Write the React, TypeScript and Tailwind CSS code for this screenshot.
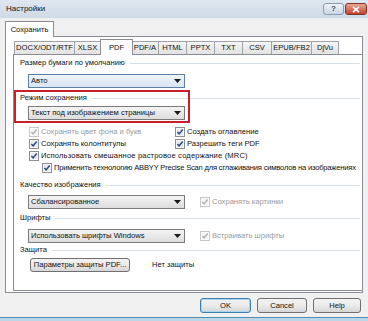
import React from "react";

const Check = ({ on = true, off = false }: { on?: boolean; off?: boolean }) => (
  <svg width="10" height="10" viewBox="0 0 10 10" className="shrink-0">
    <rect x="0.5" y="0.5" width="9" height="9" fill="#fff" stroke={off ? "#c8c8c8" : "#8e8f8f"} />
    <rect x="1.5" y="1.5" width="7" height="7" fill={off ? "#f5f5f5" : "#e6eaf0"} />
    {on && (
      <path
        d="M2.4 5.1 L4.1 6.9 L7.7 2.6"
        fill="none"
        stroke={off ? "#b4b4b4" : "#2a4a7c"}
        strokeWidth="1.5"
      />
    )}
  </svg>
);

const Arrow = () => (
  <svg width="7" height="4" viewBox="0 0 7 4" className="shrink-0">
    <path d="M0 0H7L3.5 4Z" fill="#1a1a1a" />
  </svg>
);

const Combo = ({ text, blue }: { text: string; blue?: boolean }) => (
  <div
    className={
      blue
        ? "ml-[14px] w-[157px] h-[14px] flex items-center border border-[#5b7fa6] bg-gradient-to-b from-[#eef4fb] to-[#d8e5f2] pl-[2px] pr-[3px]"
        : "ml-[14px] w-[157px] h-[14px] flex items-center border border-[#7a7a7a] bg-gradient-to-b from-[#f4f4f4] to-[#dddddd] pl-[2px] pr-[3px]"
    }
  >
    <span className="flex-1 truncate leading-none">{text}</span>
    <Arrow />
  </div>
);

const GroupHead = ({ label }: { label: string }) => (
  <div className="flex items-center h-[10px] pl-[6px] pr-[2px] gap-[5px]">
    <span className="leading-none">{label}</span>
    <div className="flex-1 h-px bg-[#d5dfe5]" />
  </div>
);

const tabs = [
  { t: "DOCX/ODT/RTF", w: "w-[61px]" },
  { t: "XLSX", w: "w-[27px]" },
  { t: "PDF", w: "w-[33px]", sel: true },
  { t: "PDF/A", w: "w-[28px]" },
  { t: "HTML", w: "w-[29px]" },
  { t: "PPTX", w: "w-[29px]" },
  { t: "TXT", w: "w-[29px]" },
  { t: "CSV", w: "w-[30px]" },
  { t: "EPUB/FB2", w: "w-[41px]" },
  { t: "DjVu", w: "w-[28px]" },
];

const Btn = ({ label, w, def }: { label: string; w: string; def?: boolean }) => (
  <div
    className={`${w} h-[15px] flex items-center justify-center rounded-[3px] border bg-gradient-to-b from-[#f2f2f2] via-[#ebebeb] to-[#d6d6d6] ${
      def ? "border-[#3c7fb1] shadow-[inset_0_0_0_1px_#a9d4ee]" : "border-[#707070]"
    }`}
  >
    {label}
  </div>
);

export default function App() {
  return (
    <div className="w-[368px] h-[321px] bg-[#f0f0f0] flex flex-col overflow-hidden relative whitespace-nowrap font-['Liberation_Sans',Arial,sans-serif] text-[7.6px] text-[#111]">
      {/* title bar */}
      <div className="h-[18px] flex items-center pl-[6px] pr-[1px] bg-gradient-to-b from-[#dfe7f0] to-[#cfdae6]">
        <span className="flex-1 text-[8px]">Настройки</span>
        <div className="w-[21px] h-[12px] rounded-[3px] border border-[#8a9bb0] bg-gradient-to-b from-[#eef3f8] to-[#c9d6e4] flex items-center justify-center text-[8px] text-[#3b4b61] font-bold leading-none">
          ?
        </div>
        <div className="ml-[1px] w-[22px] h-[12px] rounded-[3px] border border-[#7e3328] bg-gradient-to-b from-[#e8a593] to-[#c4402f] flex items-center justify-center">
          <svg width="8" height="7" viewBox="0 0 8 7">
            <path d="M1 0.8L7 6.2M7 0.8L1 6.2" stroke="#fff" strokeWidth="1.7" />
          </svg>
        </div>
      </div>

      <div className="px-[5px] pt-[3px] pr-[5px]">
        {/* outer tab */}
        <div className="relative z-10 -mb-px w-[49px] h-[16px] border border-b-0 border-[#898c95] bg-white flex items-center justify-center">
          Сохранить
        </div>
        {/* outer panel */}
        <div className="w-[358px] h-[257px] border border-[#898c95] bg-white pl-[7px] pt-[2px] pb-px flex flex-col">
          {/* inner tab strip */}
          <div className="h-[15px] flex items-end pl-px">
            {tabs.map((tab) =>
              tab.sel ? (
                <div
                  key={tab.t}
                  className={`${tab.w} relative z-10 -mb-px -mx-px h-[16px] border border-b-0 border-[#898c95] bg-white flex items-center justify-center leading-none`}
                >
                  {tab.t}
                </div>
              ) : (
                <div
                  key={tab.t}
                  className={`${tab.w} -ml-px first:ml-0 h-[13px] border border-b-0 border-[#a0a3aa] bg-gradient-to-b from-[#f5f5f5] to-[#e2e2e2] flex items-center justify-center leading-none`}
                >
                  {tab.t}
                </div>
              )
            )}
          </div>

          {/* inner panel */}
          <div className="flex-1 border-t border-l border-b border-[#898c95] bg-white flex flex-col pt-[3px]">
            <GroupHead label="Размер бумаги по умолчанию" />
            <div className="mt-[6px]">
              <Combo text="Авто" blue />
            </div>

            <div className="mt-[5px]">
              <GroupHead label="Режим сохранения" />
            </div>
            <div className="mt-[3px]">
              <Combo text="Текст под изображением страницы" />
            </div>

            <div className="mt-[6px] flex flex-col">
              <div className="h-[12px] flex items-center">
                <div className="w-[161px] pl-[15px] flex items-center gap-[2px] text-[#9a9a9a]">
                  <Check off />
                  <span className="leading-none">Сохранять цвет фона и букв</span>
                </div>
                <div className="flex items-center gap-[2px]">
                  <Check />
                  <span className="leading-none">Создать оглавление</span>
                </div>
              </div>
              <div className="h-[12px] flex items-center">
                <div className="w-[161px] pl-[15px] flex items-center gap-[2px]">
                  <Check />
                  <span className="leading-none">Сохранять колонтитулы</span>
                </div>
                <div className="flex items-center gap-[2px]">
                  <Check />
                  <span className="leading-none">Разрешить теги PDF</span>
                </div>
              </div>
              <div className="h-[12px] flex items-center pl-[15px] gap-[2px]">
                <Check />
                <span className="leading-none tracking-[0.15px]">
                  Использовать смешанное растровое содержание (MRC)
                </span>
              </div>
              <div className="h-[12px] flex items-center pl-[28px] gap-[2px]">
                <Check />
                <span className="leading-none tracking-[-0.2px]">
                  Применить технологию ABBYY Precise Scan для сглаживания символов на изображениях
                </span>
              </div>
            </div>

            <div className="mt-[6px]">
              <GroupHead label="Качество изображения" />
            </div>
            <div className="mt-[5px] flex items-center">
              <Combo text="Сбалансированное" />
              <div className="ml-[15px] flex items-center gap-[2px] text-[#9a9a9a]">
                <Check off />
                <span className="leading-none">Сохранять картинки</span>
              </div>
            </div>

            <div className="mt-[4px]">
              <GroupHead label="Шрифты" />
            </div>
            <div className="mt-[6px] flex items-center">
              <Combo text="Использовать шрифты Windows" />
              <div className="ml-[15px] flex items-center gap-[2px] text-[#9a9a9a]">
                <Check off />
                <span className="leading-none">Встраивать шрифты</span>
              </div>
            </div>

            <div className="mt-[2px]">
              <GroupHead label="Защита" />
            </div>
            <div className="mt-[3px] flex items-center">
              <div className="ml-[16px] w-[100px] h-[14px] rounded-[3px] border border-[#707070] bg-gradient-to-b from-[#f2f2f2] via-[#ebebeb] to-[#d6d6d6] flex items-center justify-center leading-none">
                Параметры защиты PDF...
              </div>
              <span className="ml-[22px] leading-none">Нет защиты</span>
            </div>
          </div>
        </div>
      </div>

      {/* dialog buttons */}
      <div className="mt-[5px] flex justify-end gap-[6px] pr-[7px]">
        <Btn label="OK" w="w-[51px]" def />
        <Btn label="Cancel" w="w-[50px]" />
        <Btn label="Help" w="w-[48px]" />
      </div>

      <div className="mt-auto h-[4px] border-t border-[#4f8fb4] bg-[#bcd6e8]" />

      {/* red annotation frame */}
      <div className="absolute left-[14px] top-[90px] w-[176px] h-[33px] border-2 border-[#c8202a] pointer-events-none" />
    </div>
  );
}
